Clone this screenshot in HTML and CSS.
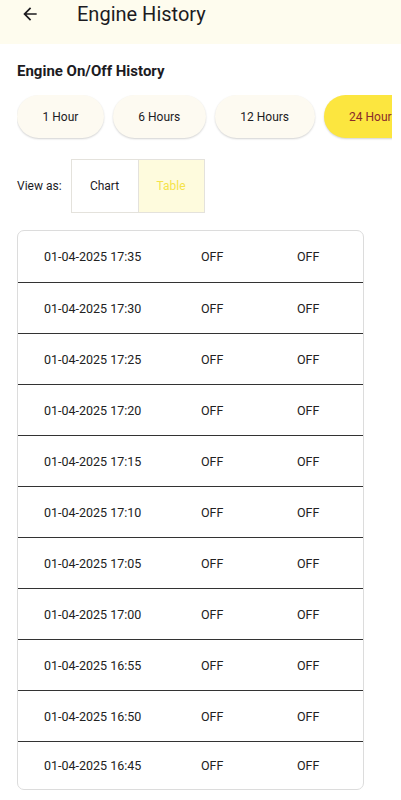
FILE: index.html
```html
<!DOCTYPE html>
<html lang="en">
<head>
<meta charset="UTF-8">
<meta name="viewport" content="width=device-width, initial-scale=1.0">
<title>Engine History</title>
<link rel="stylesheet" href="styles.css">
</head>
<body>
<header class="appBar">
  <button class="backBtn" aria-label="Back">
    <svg width="20" height="20" viewBox="0 0 24 24"><path d="M20 11H7.83l5.59-5.59L12 4l-8 8 8 8 1.41-1.41L7.83 13H20v-2z" fill="#1c1b1f"/></svg>
  </button>
  <h1 class="appTitle">Engine History</h1>
</header>

<main class="content">
  <h2 class="sectionTitle">Engine On/Off History</h2>

  <div class="rangeRow">
    <button class="chip">1 Hour</button>
    <button class="chip">6 Hours</button>
    <button class="chip">12 Hours</button>
    <button class="chip active">24 Hours</button>
  </div>

  <div class="viewRow">
    <span class="viewLabel">View as:</span>
    <div class="toggle">
      <button class="toggleBtn">Chart</button>
      <button class="toggleBtn selected">Table</button>
    </div>
  </div>

  <div class="historyTable" id="historyTable"></div>
</main>

<script>
const times = ["17:35", "17:30", "17:25", "17:20", "17:15", "17:10", "17:05", "17:00", "16:55", "16:50", "16:45"];
let table = document.getElementById("historyTable");
times.forEach(t => {
  let row = document.createElement("div");
  row.className = "tableRow";
  row.innerHTML = `<span>01-04-2025 ${t}</span><span>OFF</span><span>OFF</span>`;
  table.appendChild(row);
});
</script>
</body>
</html>
```

FILE: styles.css
```css
body {
  margin: 0;
  font-family: Roboto, 'Noto Sans', sans-serif;
  color: #1c1b1f;
  background: #fff;
  overflow: hidden;
}
button {
  font-family: inherit;
  border: none;
  background: none;
  padding: 0;
  cursor: pointer;
}
.appBar {
  height: 44px;
  background: #fefcee;
  display: flex;
  align-items: center;
  box-sizing: border-box;
  padding: 0 0 17px 20px;
}
.backBtn {
  width: 20px;
  height: 20px;
  display: flex;
}
.appTitle {
  margin: 0 0 0 37px;
  font-size: 20px;
  font-weight: 400;
  color: #1c1b1f;
}
.content {
  padding: 18px 0 0 17px;
}
.sectionTitle {
  margin: 0;
  font-size: 15px;
  font-weight: 700;
  line-height: 18px;
}
.rangeRow {
  display: flex;
  gap: 9px;
  margin: 15px 9px 0 0;
  padding-bottom: 4px;
  overflow: hidden;
}
.chip {
  flex: none;
  height: 43px;
  padding: 0 25.5px;
  border-radius: 22px;
  background: #fdfaf1;
  color: #1c1b1f;
  font-size: 12px;
  box-shadow: 0 1px 2px rgba(0, 0, 0, 0.18);
}
.chip.active {
  background: #fce63f;
  color: #8a2b2b;
}
.viewRow {
  display: flex;
  align-items: center;
  margin-top: 17px;
}
.viewLabel {
  font-size: 12px;
  margin-right: 9px;
}
.toggle {
  display: flex;
  border: 1px solid #e4e2dc;
  height: 52px;
}
.toggleBtn {
  width: 66px;
  font-size: 12px;
  color: #1c1b1f;
  background: #fff;
}
.toggleBtn.selected {
  border-left: 1px solid #e4e2dc;
  background: #fefbdd;
  color: #f5e34a;
}
.historyTable {
  width: 345px;
  margin-top: 17px;
  border: 1px solid #dcdcdc;
  border-radius: 7px;
  overflow: hidden;
}
.tableRow {
  display: grid;
  grid-template-columns: 157px 96px 1fr;
  align-items: center;
  height: 50px;
  padding-left: 26px;
  border-bottom: 1px solid #333;
  font-size: 12.5px;
  color: #222;
}
.tableRow:first-child {
  height: 51px;
}
.tableRow:last-child {
  border-bottom: none;
  height: 47px;
}
```
